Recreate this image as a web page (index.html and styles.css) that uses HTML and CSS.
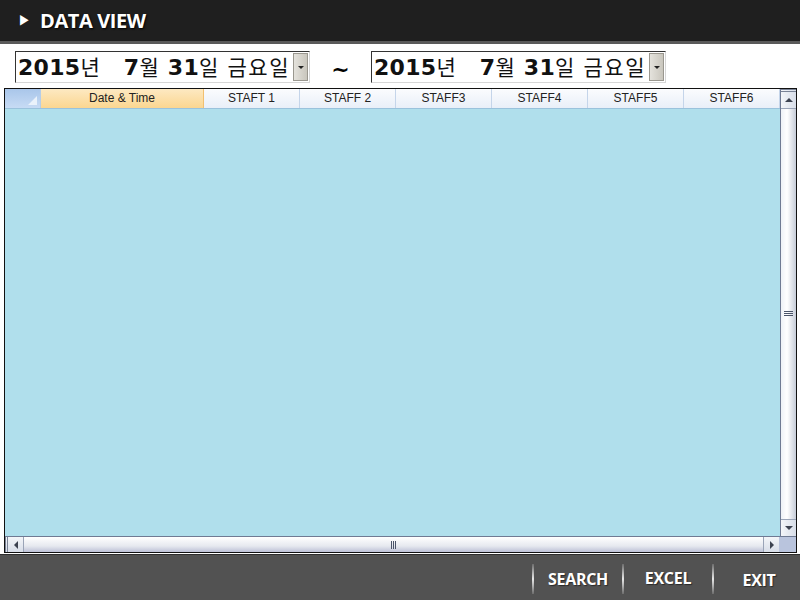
FILE: index.html
```html
<!DOCTYPE html>
<html lang="ko">
<head>
    <meta charset="UTF-8">
    <title>DATA VIEW</title>
    <link rel="stylesheet" href="styles.css">
</head>
<body>

    <!-- Title bar -->
    <div class="title-bar">
        <span class="title-arrow">&#9654;</span>
        <span class="title-text">DATA VIEW</span>
    </div>

    <!-- Date range -->
    <div class="date-row">
        <div class="date-box">
            <span class="date-text"><b>2015</b>년&nbsp;&nbsp; <b>7</b>월 <b>31</b>일 금요일</span>
            <span class="drop-btn"><i></i></span>
        </div>
        <span class="tilde">~</span>
        <div class="date-box">
            <span class="date-text"><b>2015</b>년&nbsp;&nbsp; <b>7</b>월 <b>31</b>일 금요일</span>
            <span class="drop-btn"><i></i></span>
        </div>
    </div>

    <!-- Grid -->
    <div class="grid">
        <div class="grid-main">
            <div class="grid-view">
                <div class="grid-head">
                    <div class="corner"><i></i></div>
                    <div class="col col-date">Date &amp; Time</div>
                    <div class="col">STAFT 1</div>
                    <div class="col">STAFF 2</div>
                    <div class="col">STAFF3</div>
                    <div class="col">STAFF4</div>
                    <div class="col">STAFF5</div>
                    <div class="col">STAFF6</div>
                </div>
                <div class="grid-body"></div>
            </div>
            <div class="vscroll">
                <div class="sb-btn sb-up"><i></i></div>
                <div class="vthumb"><span class="grip-h"></span></div>
                <div class="sb-btn sb-down"><i></i></div>
            </div>
        </div>
        <div class="hscroll-row">
            <div class="hscroll">
                <div class="sb-btn sb-left"><i></i></div>
                <div class="hthumb"><span class="grip-v"></span></div>
                <div class="sb-btn sb-right"><i></i></div>
            </div>
            <div class="sb-corner"></div>
        </div>
    </div>

    <!-- Footer buttons -->
    <div class="footer">
        <div class="btn">SEARCH</div>
        <div class="btn btn-excel">EXCEL</div>
        <div class="btn">EXIT</div>
    </div>

</body>
</html>
```

FILE: styles.css
```css
html, body {
    margin: 0;
    padding: 0;
}

body {
    width: 800px;
    height: 600px;
    overflow: hidden;
    background-color: #ffffff;
    font-family: "Liberation Sans", Arial, sans-serif;
    display: flex;
    flex-direction: column;
}

/* Title bar */
.title-bar {
    height: 41px;
    background-color: #1f1f1f;
    border-bottom: 3px solid #5a5a5a;
    display: flex;
    align-items: center;
    color: #ffffff;
    flex-shrink: 0;
}

.title-arrow {
    font-size: 13px;
    margin-left: 18px;
    margin-right: 9px;
    margin-top: 1px;
}

.title-text {
    font-family: "Open Sans", sans-serif;
    font-weight: bold;
    font-size: 20px;
    letter-spacing: -0.4px;
    text-shadow: 1px 1px 2px #000000;
}

/* Date pickers */
.date-row {
    height: 44px;
    display: flex;
    align-items: center;
    padding-left: 15px;
    padding-top: 2px;
    box-sizing: border-box;
    flex-shrink: 0;
}

.date-box {
    width: 295px;
    height: 32px;
    box-sizing: border-box;
    border: 1px solid #333333;
    border-right-color: #d6d6d6;
    border-bottom-color: #d6d6d6;
    display: flex;
    align-items: center;
    justify-content: space-between;
    background-color: #ffffff;
}

.date-text {
    font-family: "Noto Sans CJK KR", sans-serif;
    font-size: 21px;
    color: #111111;
    padding-left: 2px;
    white-space: pre;
    letter-spacing: 1.6px;
    line-height: 30px;
}

.date-text b {
    font-family: "DejaVu Sans", sans-serif;
    font-weight: bold;
    font-size: 22px;
    letter-spacing: 0.3px;
}

.drop-btn {
    width: 15px;
    height: 28px;
    margin-right: 1px;
    background: linear-gradient(to right, #e4e2dc, #c9c6bd);
    border: 1px solid #9a978f;
    box-sizing: border-box;
    display: flex;
    align-items: center;
    justify-content: center;
}

.drop-btn i {
    border-left: 3px solid transparent;
    border-right: 3px solid transparent;
    border-top: 3px solid #222222;
}

.tilde {
    width: 61px;
    text-align: center;
    font-family: "DejaVu Sans", sans-serif;
    font-weight: bold;
    font-size: 22px;
    margin-top: 4px;
}

/* Grid */
.grid {
    margin: 0 3px 0 4px;
    border: 1px solid #111111;
    height: 465px;
    box-sizing: border-box;
    display: flex;
    flex-direction: column;
    flex-shrink: 0;
}

.grid-main {
    flex: 1;
    display: flex;
}

.grid-view {
    flex: 1;
    display: flex;
    flex-direction: column;
    background-color: #b0dfec;
}

.grid-head {
    height: 19px;
    display: flex;
    border-bottom: 1px solid #9ac2dc;
    background-color: #f7f9fd;
}

.corner {
    width: 35px;
    background: linear-gradient(to bottom, #a9c6ea, #c7dbf4);
    border-right: 1px solid #b6cde7;
    position: relative;
}

.corner i {
    position: absolute;
    right: 3px;
    bottom: 3px;
    border-left: 9px solid transparent;
    border-bottom: 9px solid #eaf2fb;
}

.col {
    width: 95px;
    border-right: 1px solid #c5d5ea;
    background: linear-gradient(to bottom, #fbfcfe, #e9eff8);
    font-size: 12px;
    color: #222222;
    text-align: center;
    line-height: 19px;
}

.col-date {
    width: 162px;
    background: linear-gradient(to bottom, #fde9c2, #fbd690);
    border-right: 1px solid #f2c070;
}

.grid-body {
    flex: 1;
}

/* Scrollbars */
.vscroll {
    width: 16px;
    display: flex;
    flex-direction: column;
    background-color: #eef1f6;
    border-left: 1px solid #6f7a93;
}

.sb-btn {
    display: flex;
    align-items: center;
    justify-content: center;
    background: linear-gradient(to right, #f4f6f9, #d7dde8);
}

.sb-up,
.sb-down {
    height: 16px;
}

.sb-up {
    border-top: 3px double #7a8396;
}

.sb-up i {
    border-left: 4px solid transparent;
    border-right: 4px solid transparent;
    border-bottom: 4px solid #3c4250;
}

.sb-down i {
    border-left: 4px solid transparent;
    border-right: 4px solid transparent;
    border-top: 4px solid #3c4250;
}

.vthumb {
    flex: 1;
    background: linear-gradient(to right, #eef1f6 0%, #ffffff 40%, #c6ccd8 100%);
    border-top: 1px solid #9aa4b7;
    border-bottom: 1px solid #9aa4b7;
    display: flex;
    align-items: center;
    justify-content: center;
}

.grip-h {
    width: 9px;
    height: 6px;
    background: repeating-linear-gradient(to bottom, #4a5469 0 1px, transparent 1px 2px);
}

.hscroll-row {
    height: 15px;
    display: flex;
    border-top: 1px solid #6f7a93;
}

.hscroll {
    flex: 1;
    display: flex;
    background: linear-gradient(to bottom, #ffffff, #e6e9ef 60%, #bcc0d6);
}

.sb-left,
.sb-right {
    width: 15px;
    background: linear-gradient(to bottom, #f4f6f9, #d7dde8);
}

.sb-left {
    border-left: 3px double #7a8396;
}

.sb-left i {
    border-top: 4px solid transparent;
    border-bottom: 4px solid transparent;
    border-right: 4px solid #3c4250;
}

.sb-right i {
    border-top: 4px solid transparent;
    border-bottom: 4px solid transparent;
    border-left: 4px solid #3c4250;
}

.hthumb {
    flex: 1;
    display: flex;
    align-items: center;
    justify-content: center;
    border-left: 1px solid #9aa4b7;
    border-right: 1px solid #9aa4b7;
}

.grip-v {
    width: 6px;
    height: 8px;
    background: repeating-linear-gradient(to right, #4a5469 0 1px, transparent 1px 2px);
}

.sb-corner {
    width: 17px;
    background-color: #b9c4dd;
}

/* Footer */
.footer {
    flex: 1;
    margin-top: 1px;
    background-color: #525252;
    border-top: 1px solid #2e2e2e;
    display: flex;
    justify-content: flex-end;
    align-items: center;
}

.btn {
    width: 90px;
    height: 30px;
    margin-top: 2px;
    box-sizing: border-box;
    border-left: 2px solid transparent;
    border-image: linear-gradient(to bottom, rgba(255,255,255,0.1), #e8e8e8 50%, rgba(255,255,255,0.1)) 1;
    color: #ffffff;
    font-family: "Open Sans", sans-serif;
    font-weight: bold;
    font-size: 16px;
    letter-spacing: -0.3px;
    display: flex;
    align-items: center;
    justify-content: center;
    text-shadow: 1px 1px 1px #2a2a2a;
}

.btn-excel {
    padding-bottom: 2px;
}

.btn:last-child {
    width: 88px;
    padding-top: 2px;
    padding-left: 4px;
}
```
